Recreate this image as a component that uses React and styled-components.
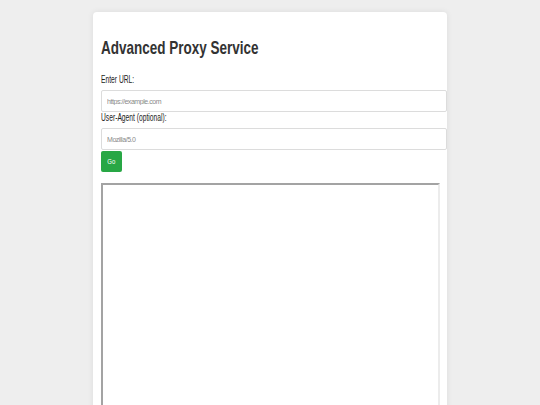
import React from 'react';
import styled, { createGlobalStyle, css } from 'styled-components';

const GlobalStyle = createGlobalStyle`
  html, body {
    margin: 0;
    padding: 0;
    overflow: hidden;
    background: #eeeeee;
    font-family: "Liberation Sans", Arial, sans-serif;
    color: #333;
  }
`;

// the text in this page is set narrow
const narrow = css`
  transform: scaleX(${(p) => p.$squeeze || 0.71});
  transform-origin: left center;
`;

const Page = styled.div`
  padding: 12px 0 0 93px;
`;

const Card = styled.div`
  width: 338px;
  min-height: 460px;
  padding: 12px 8px;
  background: #fff;
  border-radius: 4px;
  box-shadow: 0 0 6px rgba(0, 0, 0, 0.08);
`;

const Title = styled.h1`
  ${narrow};
  margin: 13px 0 15px;
  font-size: 19px;
  font-weight: bold;
  color: #333;
  white-space: nowrap;
`;

const Label = styled.label`
  ${narrow};
  display: block;
  margin: 0 0 5px;
  font-size: 10px;
  line-height: 11px;
  color: #222;
  white-space: nowrap;
`;

const Field = styled.input`
  display: block;
  box-sizing: border-box;
  width: calc(100% + 8px);
  height: 22px;
  margin: 0 0 ${(p) => p.$gap}px;
  padding: 0 5px;
  border: 1px solid #dcdcdc;
  border-radius: 2px;
  font-family: "Liberation Sans", Arial, sans-serif;
  font-size: 7px;
  letter-spacing: -0.45px;
  color: #555;
  outline: none;

  &::placeholder {
    color: #8a8a8a;
  }
`;

const GoButton = styled.button`
  display: flex;
  align-items: center;
  justify-content: center;
  width: 21px;
  height: 21px;
  padding: 0;
  border: none;
  border-radius: 2px;
  background: #28a745;
  color: #fff;
  font-family: "Liberation Sans", Arial, sans-serif;
  font-size: 8px;
  cursor: pointer;
`;

const ButtonText = styled.span`
  display: inline-block;
  transform: scaleX(0.75);
`;

const Viewer = styled.iframe`
  display: block;
  box-sizing: border-box;
  width: calc(100% + 1px);
  height: 400px;
  margin-top: 11px;
  border: 2px solid;
  border-color: #a3a3a3 #ececec #ececec #a3a3a3;
  background: #fff;
`;

export default function App() {
  return (
    <>
      <GlobalStyle />
      <Page>
        <Card>
          <Title>Advanced Proxy Service</Title>
          <Label htmlFor="url" $squeeze={0.67}>Enter URL:</Label>
          <Field id="url" placeholder="https://example.com" $gap={0} />
          <Label htmlFor="ua" $squeeze={0.67}>User-Agent (optional):</Label>
          <Field id="ua" placeholder="Mozilla/5.0" $gap={1} />
          <GoButton>
            <ButtonText>Go</ButtonText>
          </GoButton>
          <Viewer title="proxy-frame" />
        </Card>
      </Page>
    </>
  );
}
